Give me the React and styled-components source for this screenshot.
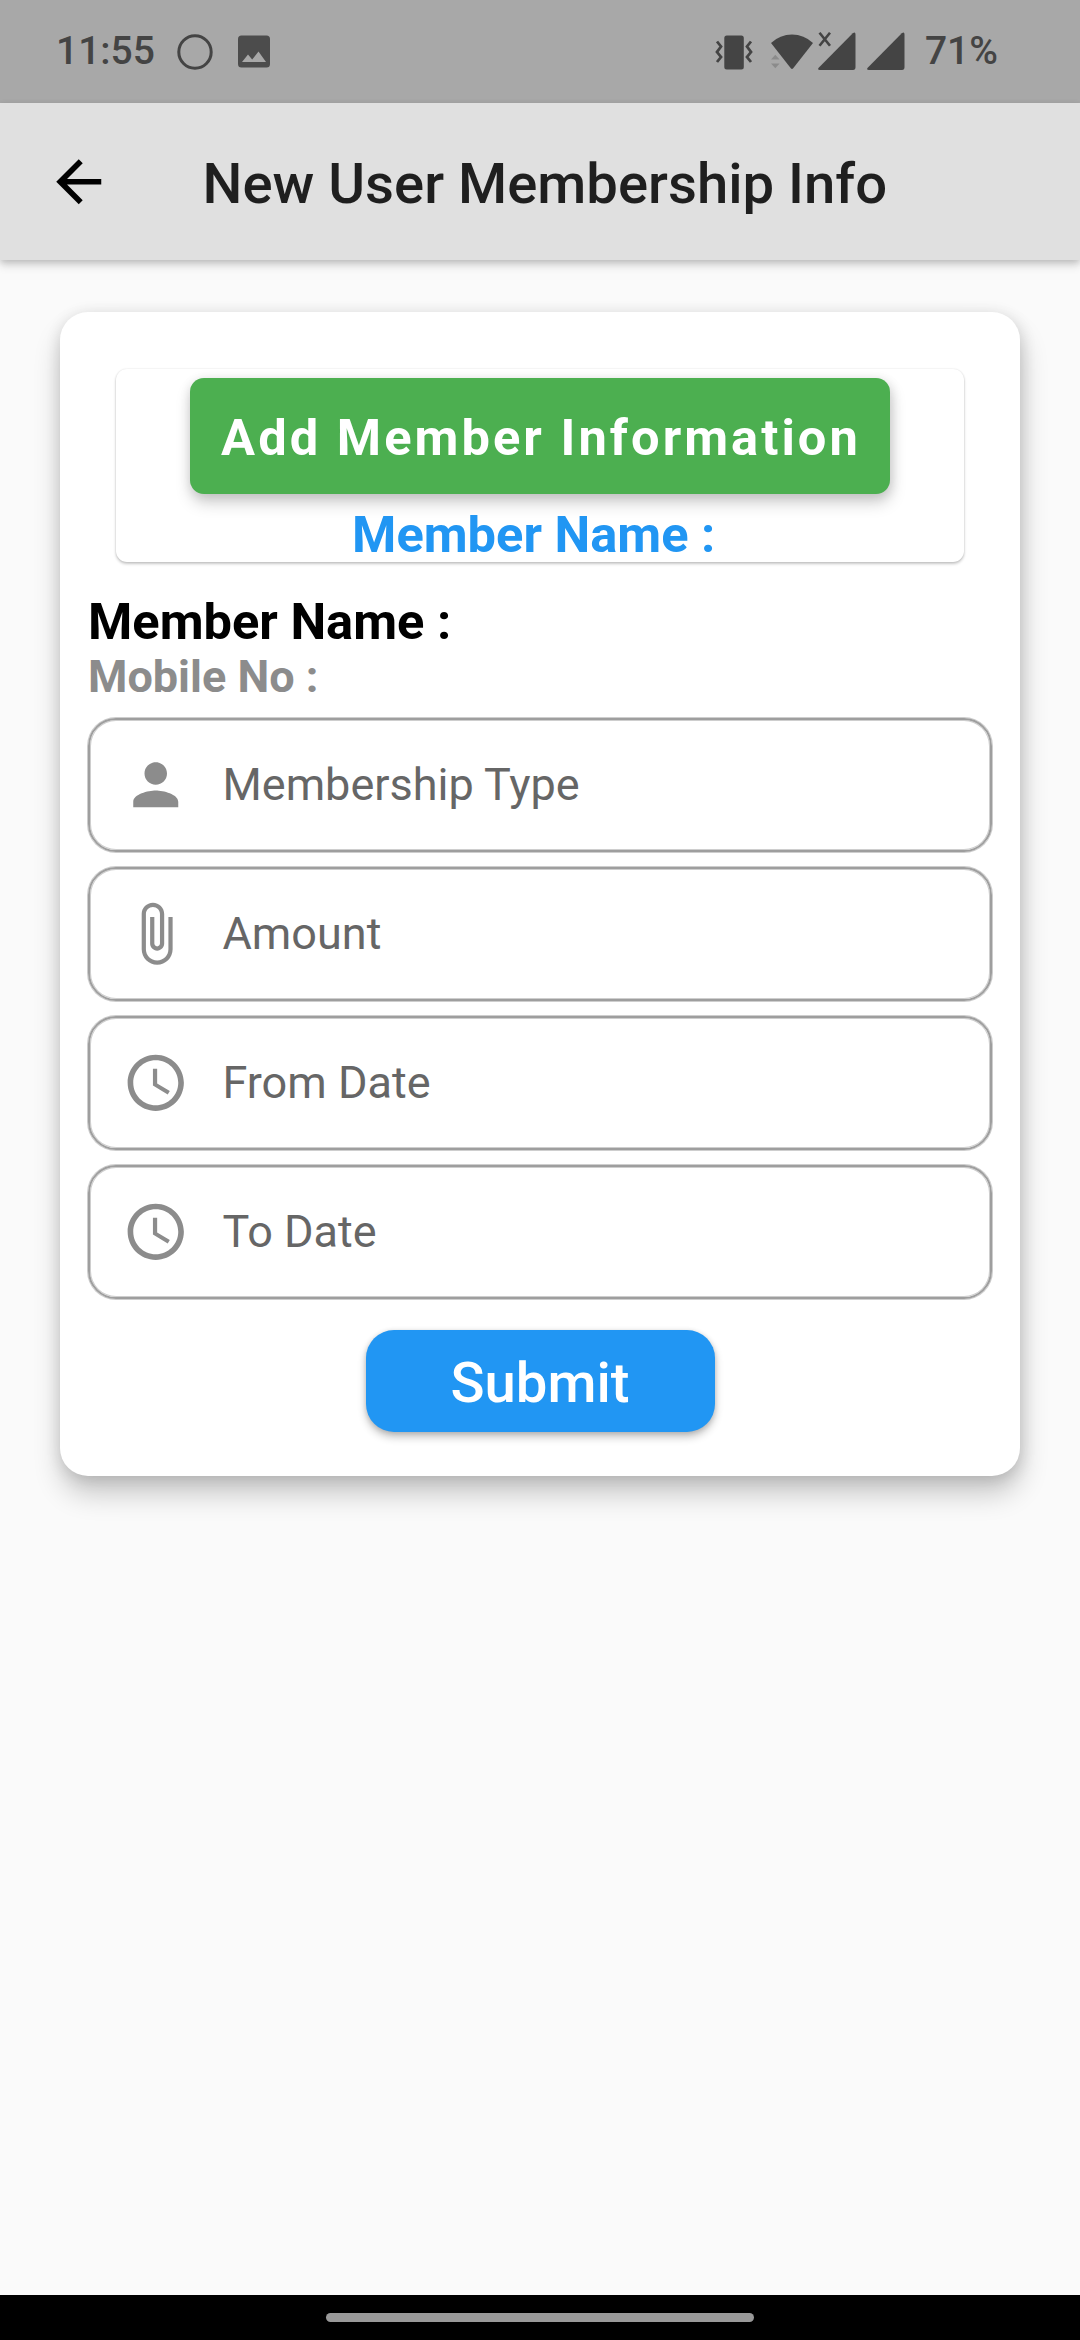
import React from "react";
import styled, { createGlobalStyle } from "styled-components";

const GlobalStyle = createGlobalStyle`
  *, *::before, *::after { box-sizing: border-box; }
  body { margin: 0; background: #fafafa; font-family: Roboto, "Noto Sans", sans-serif; }
  button, input { font-family: inherit; }
`;

const Screen = styled.div`
  width: 1080px;
  height: 2340px;
  display: flex;
  flex-direction: column;
  background: #fafafa;
  overflow: hidden;
`;

const StatusBar = styled.div`
  height: 103px;
  flex: none;
  display: flex;
  align-items: center;
  justify-content: space-between;
  padding: 0 82px 0 56px;
  background: #a8a8a8;
  color: #444;
`;

const StatusGroup = styled.div`
  display: flex;
  align-items: center;
  height: 60px;
`;

const StatusText = styled.span`
  font-size: 39px;
  font-weight: 500;
  line-height: 46px;
  margin-left: ${(p) => p.$left || 0}px;
  padding-bottom: 1px;
`;

const StatusIcon = styled.svg`
  display: block;
  flex: none;
  width: ${(p) => p.$w}px;
  height: 40px;
  margin-left: ${(p) => p.$left || 0}px;
  fill: #444;
`;

const AppBar = styled.header`
  height: 157px;
  flex: none;
  display: flex;
  align-items: center;
  padding-left: 45px;
  background: #e0e0e0;
  box-shadow: 0 5px 9px rgba(0, 0, 0, 0.16), 0 2px 6px rgba(0, 0, 0, 0.12);
`;

const BackButton = styled.button`
  border: 0;
  padding: 1px 0 0;
  background: none;
  display: flex;
  color: #000;
`;

const Title = styled.h1`
  margin: 0 0 0 90px;
  padding-top: 4px;
  font-size: 56.25px;
  font-weight: 500;
  line-height: 66px;
  color: #1f1f1f;
  white-space: nowrap;
`;

const Content = styled.main`
  flex: 1;
  padding: 52px 60px 0;
`;

const Card = styled.section`
  height: 1164px;
  padding: 57px 28px 0;
  border-radius: 28px;
  background: #fff;
  display: flex;
  flex-direction: column;
  box-shadow: 1px 18px 28px rgba(0, 0, 0, 0.2), 1px 3px 16px rgba(0, 0, 0, 0.14);
`;

const MemberCard = styled.div`
  height: 193px;
  margin: 0 28px;
  padding-top: 9px;
  display: flex;
  flex-direction: column;
  align-items: center;
  border-radius: 11px;
  background: #fff;
  box-shadow: 0 2px 3px rgba(0, 0, 0, 0.22), 0 0 2px rgba(0, 0, 0, 0.12);
`;

const AddButton = styled.button`
  width: 700px;
  height: 116px;
  border: 0;
  border-radius: 14px;
  padding: 2px 0 0 2px;
  background: #4caf50;
  color: #fff;
  font-size: 50.625px;
  font-weight: 700;
  letter-spacing: 3.05px;
  white-space: nowrap;
  box-shadow: 1px 9px 16px rgba(0, 0, 0, 0.18), 1px 2px 12px rgba(0, 0, 0, 0.12);
`;

const MemberLine = styled.div`
  font-size: ${(p) => p.$size}px;
  line-height: ${(p) => p.$line}px;
  margin-top: ${(p) => p.$top || 0}px;
  color: ${(p) => p.$color};
  font-weight: 700;
  white-space: pre;
`;

const Fields = styled.div`
  margin-top: 16px;
  display: flex;
  flex-direction: column;
  gap: 15px;
`;

const Field = styled.label`
  height: 134px;
  display: flex;
  align-items: center;
  padding-left: 32px;
  border: 2px solid #9e9e9e;
  border-radius: 28px;
  color: #8c8c8c;
  box-shadow: 0 0 0 1px rgba(158, 158, 158, 0.5), inset 0 0 0 1px rgba(158, 158, 158, 0.5);
`;

const Placeholder = styled.span`
  margin-left: 33px;
  font-size: 45px;
  line-height: 54px;
  color: #666;
`;

const Icon = styled.svg`
  display: block;
  width: 67.5px;
  height: 67.5px;
  flex: none;
  fill: currentColor;
`;

const SubmitButton = styled.button`
  align-self: center;
  margin-top: 31px;
  width: 349px;
  height: 102px;
  border: 0;
  border-radius: 28px;
  padding: 4px 0 0;
  background: #2196f3;
  color: #fff;
  font-size: 56.25px;
  font-weight: 500;
  box-shadow: 0 5px 8px rgba(0, 0, 0, 0.24), 0 1px 5px rgba(0, 0, 0, 0.14);
`;

const NavBar = styled.div`
  height: 45px;
  flex: none;
  display: flex;
  align-items: center;
  justify-content: center;
  background: #000;
`;

const Handle = styled.div`
  width: 428px;
  height: 9px;
  border-radius: 5px;
  background: #999;
`;

const PERSON =
  "M12 12c2.21 0 4-1.79 4-4s-1.79-4-4-4-4 1.79-4 4 1.79 4 4 4zm0 2c-2.67 0-8 1.34-8 4v2h16v-2c0-2.66-5.33-4-8-4z";
const CLIP =
  "M16.5 6v11.5c0 2.21-1.79 4-4 4s-4-1.79-4-4V5c0-1.38 1.12-2.5 2.5-2.5s2.5 1.12 2.5 2.5v10.5c0 .55-.45 1-1 1s-1-.45-1-1V6H10v9.5c0 1.38 1.12 2.5 2.5 2.5s2.5-1.12 2.5-2.5V5c0-2.21-1.79-4-4-4S7 2.79 7 5v12.5c0 3.04 2.46 5.5 5.5 5.5s5.5-2.46 5.5-5.5V6h-1.5z";
const CLOCK =
  "M11.99 2C6.47 2 2 6.48 2 12s4.47 10 9.99 10C17.52 22 22 17.52 22 12S17.52 2 11.99 2zM12 20c-4.42 0-8-3.58-8-8s3.58-8 8-8 8 3.58 8 8-3.58 8-8 8zm.5-13H11v6l5.25 3.15.75-1.23-4.5-2.67z";
const ARROW = "M20 11H7.83l5.59-5.59L12 4l-8 8 8 8 1.41-1.41L7.83 13H20v-2z";
const SIGNAL = "M34.8 1.2Q37.5-.8 37.5 2.5V35q0 3-2.500 3H2q-3 0-1.300-2.200z";

const FIELDS = [
  { label: "Membership Type", path: PERSON },
  { label: "Amount", path: CLIP },
  { label: "From Date", path: CLOCK },
  { label: "To Date", path: CLOCK },
];

const MaterialIcon = ({ path }) => (
  <Icon viewBox="0 0 24 24" aria-hidden="true">
    <path d={path} />
  </Icon>
);

export default function App() {
  return (
    <Screen>
      <GlobalStyle />
      <StatusBar>
        <StatusGroup>
          <StatusText>11:55</StatusText>
          <StatusIcon $w={36} $left={22} viewBox="0 0 36 40">
            <circle cx="18" cy="20" r="16.2" fill="none" stroke="#444" strokeWidth="3" />
          </StatusIcon>
          <StatusIcon $w={32} $left={25} viewBox="0 0 32 40">
            <path
              fillRule="evenodd"
              fill="#4c4c4c"
              d="M3.5 3.500h25A3.500 3.500 0 0 1 32 7v25a3.500 3.500 0 0 1-3.500 3.500h-25A3.500 3.500 0 0 1 0 32V7A3.500 3.500 0 0 1 3.500 3.500zM4 30.100h24L20.500 19.500 14.200 27.500l-4.200-5z"
            />
          </StatusIcon>
        </StatusGroup>
        <StatusGroup>
          <StatusIcon $w={38} viewBox="0 0 38 40">
            <rect x="9.300" y="3.500" width="19.500" height="34" rx="2.500" />
            <path
              d="M2 9l4 5-4 5.500 4 5-4 5M36 9l-4 5 4 5.500-4 5 4 5"
              transform="translate(0 .5)"
              fill="none"
              stroke="#444"
              strokeWidth="2.800"
            />
          </StatusIcon>
          <StatusIcon $w={42} $left={18} viewBox="0 0 42 40">
            <path d="M0 11Q9 2.500 21 2.500T42 11L22.200 36.300q-1.200 1.200-2.400 0z" />
            <path d="M0 27.500h8.600L4.300 22.800zM0 31.500h8.600L4.300 36.300z" fill="#8b8b8b" />
          </StatusIcon>
          <StatusIcon $w={38} $left={5} viewBox="0 0 38 40">
            <path d={SIGNAL} />
            <path d="M1.500.8l10.500 13M12 .8L1.500 13.800" stroke="#444" strokeWidth="2.600" fill="none" />
          </StatusIcon>
          <StatusIcon $w={38} $left={11} viewBox="0 0 38 40">
            <path d={SIGNAL} />
          </StatusIcon>
          <StatusText $left={20}>71%</StatusText>
        </StatusGroup>
      </StatusBar>

      <AppBar>
        <BackButton aria-label="Back">
          <MaterialIcon path={ARROW} />
        </BackButton>
        <Title>New User Membership Info</Title>
      </AppBar>

      <Content>
        <Card>
          <MemberCard>
            <AddButton>Add Member Information</AddButton>
            <MemberLine $size={50.625} $line={54} $top={14} $color="#2196f3">
              {"Member Name : "}
            </MemberLine>
          </MemberCard>
          <MemberLine $size={50.625} $line={60} $top={30} $color="#000">
            Member Name :
          </MemberLine>
          <MemberLine $size={45} $line={50} $color="#8c8c8c">
            Mobile No :
          </MemberLine>
          <Fields>
            {FIELDS.map((field) => (
              <Field key={field.label}>
                <MaterialIcon path={field.path} />
                <Placeholder>{field.label}</Placeholder>
              </Field>
            ))}
          </Fields>
          <SubmitButton>Submit</SubmitButton>
        </Card>
      </Content>

      <NavBar>
        <Handle />
      </NavBar>
    </Screen>
  );
}
